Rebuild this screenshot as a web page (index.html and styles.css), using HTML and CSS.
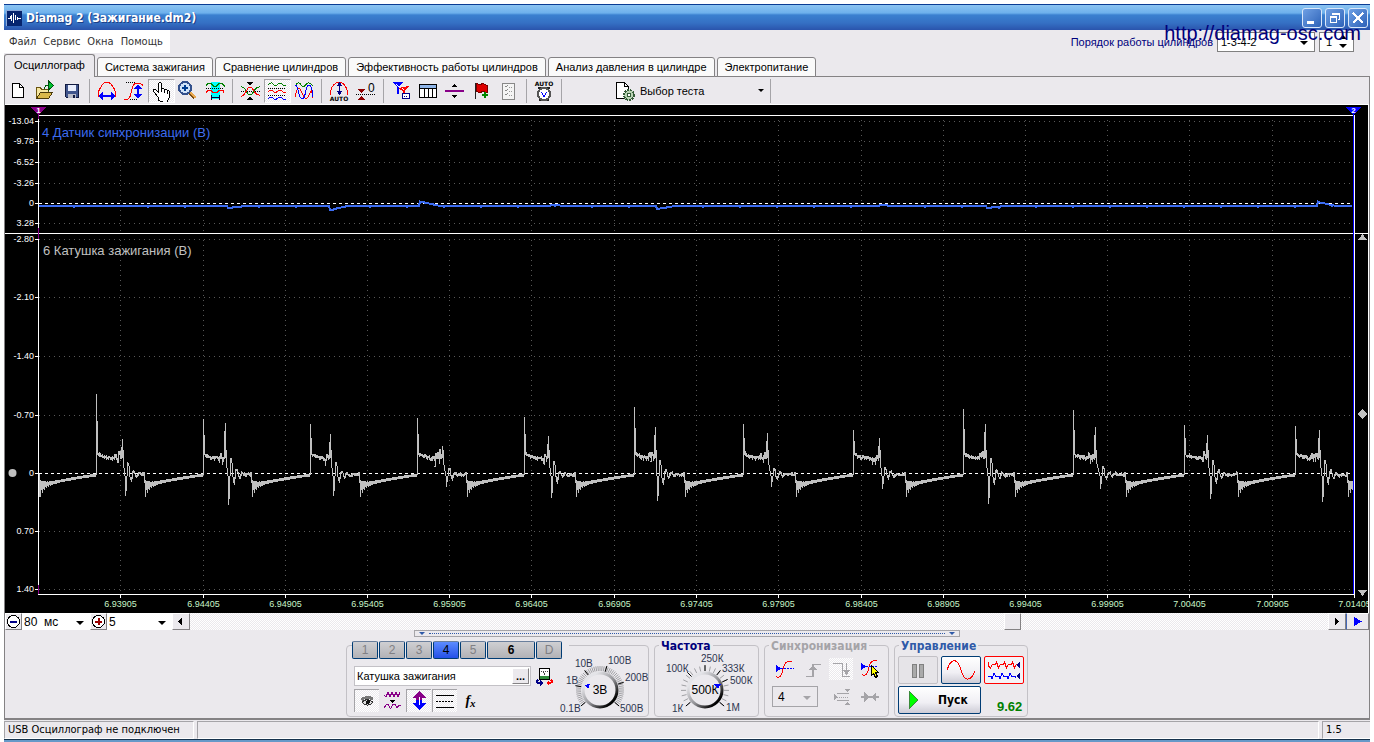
FILE: index.html
```html
<!DOCTYPE html>
<html lang="ru">
<head>
<meta charset="utf-8">
<title>Diamag 2 (Зажигание.dm2)</title>
<link rel="stylesheet" href="styles.css">
</head>
<body>
<div class="window">
  <header class="titlebar">
    <svg class="app-icon" viewBox="0 0 16 16"><rect width="16" height="16" fill="#8aa8d8"/><rect x="1" y="1" width="15" height="15" fill="#06246e"/><path d="M1.500 8.500h3v-3M5.500 5v6M7.500 3v10M9.500 5v5M11.500 7v3M11 8.500h4" fill="none" stroke="#fff"/></svg>
    <h1 class="title">Diamag 2 (Зажигание.dm2)</h1>
    <div class="window-buttons">
      <button class="wbtn" aria-label="Свернуть"><svg viewBox="1 1 18 18"><path d="M5 14h7" stroke="#fff" stroke-width="3"/></svg></button>
      <button class="wbtn" aria-label="Восстановить"><svg viewBox="1 1 18 18"><path d="M7.500 7V5.500h7v6H13M5.500 8.500h6v6h-6zM5 9h7M7 6h8" fill="none" stroke="#fff"/></svg></button>
      <button class="wbtn" aria-label="Закрыть"><svg viewBox="1 1 18 18"><path d="M5 5l10 10M15 5L5 15" stroke="#fff" stroke-width="2"/></svg></button>
    </div>
  </header>

  <div class="menu-row">
    <nav class="menu">
      <button>Файл</button><button>Сервис</button><button>Окна</button><button>Помощь</button>
    </nav>
    <div class="order">
      <label for="order">Порядок работы цилиндров</label>
      <span class="select order-select"><select id="order"><option>1-3-4-2</option></select></span>
      <span class="spinner"><input type="text" value="1" aria-label="Цилиндр"></span>
    </div>
  </div>
  <a class="site" href="#">http://diamag-osc.com</a>

  <div class="tabs" role="tablist">
    <button class="tab active" role="tab">Осциллограф</button>
    <button class="tab" role="tab">Система зажигания</button>
    <button class="tab" role="tab">Сравнение цилиндров</button>
    <button class="tab" role="tab">Эффективность работы цилиндров</button>
    <button class="tab" role="tab">Анализ давления в цилиндре</button>
    <button class="tab" role="tab">Электропитание</button>
  </div>

  <main class="pane">
    <div class="toolbar">
      <button class="tool" aria-label="Новый"><svg viewBox="0 0 24 22"><path d="M6.500 3.500h7l4 4v10h-11z" fill="#fff" stroke="#000"/><path d="M13.500 3.500v4h4" fill="none" stroke="#000"/></svg></button>
      <button class="tool" aria-label="Открыть"><svg viewBox="0 0 24 22"><path d="M3.500 18.500v-11h4l1 2h7v3" fill="#f5e6a0" stroke="#6b5510"/><path d="M3.500 18.500l4-6h12l-4 6z" fill="#d9b84a" stroke="#4a3a08"/><path d="M15.500 1v9l5-4.500z" fill="#00c030" stroke="#004d10"/><path d="M11 9c1-3 2-4 4-4" fill="none" stroke="#006010"/></svg></button>
      <button class="tool" aria-label="Сохранить"><svg viewBox="0 0 24 22"><path d="M5.500 4.500h13v13h-12l-1-1z" fill="#40558c" stroke="#111a40"/><path d="M8 5h8v6H8z" fill="#e9eefc"/><path d="M8 14h8v4H8z" fill="#b9bcc8"/><path d="M13 15h2v3h-2z" fill="#111a40"/></svg></button>
      <span class="sep"></span>
      <button class="tool" aria-label="Растянуть по времени"><svg viewBox="0 0 24 22"><path d="M3.500 17v-4c0-3 1-4 3-7s3-4 5.500-4 4 2 5.500 4 3 4 3 7v4" fill="none" stroke="#f00"/><path d="M5 16h14" stroke="#00f" stroke-width="2"/><path d="M3 16l5-4v8zM21 16l-5-4v8z" fill="#00f"/></svg></button>
      <button class="tool" aria-label="Растянуть по уровню"><svg viewBox="0 0 24 22"><path d="M4 2.500h9M8 19.500h8" stroke="#000" stroke-dasharray="1 1"/><path d="M2 19c5 1 6-1 7-6s2-10 6-10c3 0 5 1 6 3" fill="none" stroke="#f00"/><path d="M16 5v12" stroke="#00f" stroke-width="2"/><path d="M16 4l-4 5h8zM16 19l-4-5h8z" fill="#00f"/></svg></button>
      <button class="tool pressed" aria-label="Перемещение"><svg viewBox="0 0 24 22"><path d="M9.500 20.500v-3l-5-6v-2h2l3 3v-9l1-1h1l1 1v5h2l1 1h2l1 1h1l1 1v6l-2 3v3z" fill="#fff" stroke="#000"/><path d="M12.500 9v3M15.500 10v3M18.500 11v3" stroke="#000"/></svg></button>
      <button class="tool" aria-label="Лупа"><svg viewBox="0 0 24 22"><path d="M13 12l6 6" stroke="#7a4a10" stroke-width="4"/><path d="M14 12l6 6" stroke="#e8a850" stroke-width="2"/><circle cx="9" cy="8" r="6" fill="#cfe2f8" stroke="#33508c" stroke-width="2"/><path d="M9 5v6M6 8h6" stroke="#003c90" stroke-width="2"/></svg></button>
      <button class="tool" aria-label="Участок"><svg viewBox="0 0 24 22"><path d="M8 2h9v17H8z" fill="#0ff"/><path d="M3 5.500l2-2h3l3 3h2l3-3h3l3 3" fill="none" stroke="#008000"/><path d="M3 8.500h18" stroke="#000" stroke-dasharray="1 1"/><path d="M3 12.500l2-2h3l2 2h4l2-2h4l1 2" fill="none" stroke="#f00"/><path d="M8 17.500h8M8.500 15v5M16.500 15v5" stroke="#003"/></svg></button>
      <span class="sep"></span>
      <button class="tool" aria-label="Совместить"><svg viewBox="0 0 24 22"><path d="M3 11.500h19" stroke="#000" stroke-dasharray="1 1"/><path d="M3 7c5-1 5 8 9 8s4-9 10-8" fill="none" stroke="#008000"/><path d="M3 16c5 1 5-9 9-9s4 9 10 8" fill="none" stroke="#f00"/><path d="M9 2h6l-3 4zM9 20h6l-3-4z"/></svg></button>
      <button class="tool pressed" aria-label="Разнести"><svg viewBox="0 0 24 22"><path d="M3 5c3-3 4-3 6 0s4-2 6-2 3 4 6 2" fill="none" stroke="#008000"/><path d="M3 8.500h18M3 15.500h18" stroke="#000" stroke-dasharray="1 1"/><path d="M3 12c3-3 4-2 6 0s4-2 6-2 3 4 6 2" fill="none" stroke="#f00"/><path d="M3 19c3-3 4-2 6 0s4-2 6-2 3 4 6 2" fill="none" stroke="#00f"/></svg></button>
      <button class="tool" aria-label="Наложить"><svg viewBox="0 0 24 22"><path d="M3 6c3-5 5-3 7 0s4-4 7-3 3 3 4 2" fill="none" stroke="#008000"/><path d="M3 17C6 3 8 8 10 13s4 8 7 2 2-6 4 3" fill="none" stroke="#f00"/><path d="M3 5c4 0 3 13 7 14s3-14 7-14 3 10 4 12" fill="none" stroke="#00f"/></svg></button>
      <span class="sep"></span>
      <button class="tool" aria-label="Автомасштаб"><svg viewBox="0 0 24 22"><path d="M3.500 15v-3c1-3 1-5 3-7s4-3 5.500-3 4 1 5.500 3 3 4 3 7v3" fill="none" stroke="#f00"/><path d="M12.500 4v9" stroke="#008"/><path d="M12.500 2l-3 4h6zM12.500 15l-3-4h6z" fill="#008"/><text x="12" y="21" class="tiny" text-anchor="middle">AUTO</text></svg></button>
      <button class="tool" aria-label="Установить ноль"><svg viewBox="0 0 24 22"><path d="M4 9h7l-3.500 4zM4 20h7l-3.500-4z" fill="#900000"/><path d="M2 14.500h20" stroke="#000" stroke-dasharray="1 1"/><text x="14" y="12" class="zero">0</text></svg></button>
      <span class="sep"></span>
      <button class="tool" aria-label="Маркеры"><svg viewBox="0 0 24 22"><path d="M3 2h11l-4 5v7H8V7z" fill="#00f"/><path d="M7 4l3 3" stroke="#fff"/><path d="M9 8l11-2-4 5v6h-2v-6z" fill="#f00"/><path d="M13 8l2 2" stroke="#fff"/><path d="M13.500 13.500h7v5h-7z" fill="#fff" stroke="#008"/><path d="M15 16.500h4" stroke="#008" stroke-dasharray="1 1"/></svg></button>
      <button class="tool" aria-label="Таблица"><svg viewBox="0 0 24 22"><path d="M3.500 4.500h17v13h-17z" fill="#fff" stroke="#000"/><path d="M4 5h16v3H4z" fill="#8fb5e8"/><path d="M4 8.500h16M8.500 8v9M12.500 8v9M16.500 8v9" stroke="#000"/></svg></button>
      <button class="tool" aria-label="Разделитель"><svg viewBox="0 0 24 22"><path d="M2 11h19" stroke="#808" stroke-width="2"/><path d="M9 7l2.500-3L14 7zM9 15h5l-2.500 3z"/></svg></button>
      <button class="tool" aria-label="Добавить метку"><svg viewBox="0 0 24 22"><path d="M5.500 3v16" stroke="#222"/><path d="M6 3.500l4 1 3-1 4 2v7l-4-1-3 1-4-1z" fill="#d00" stroke="#700"/><path d="M15 12v6M12 15h6" stroke="#080" stroke-width="2"/></svg></button>
      <button class="tool" aria-label="Протокол"><svg viewBox="0 0 24 22"><path d="M5.500 3.500h12v16h-12z" fill="#f4f4f4" stroke="#888"/><path d="M8 6l1 1 2-2M8 10l1 1 2-2M8 14l1 1 2-2" fill="none" stroke="#888"/><path d="M12 7.500h4M12 11.500h4M12 15.500h4" stroke="#999" stroke-dasharray="1 1"/></svg></button>
      <span class="sep"></span>
      <button class="tool" aria-label="Автоизмерение"><svg viewBox="0 0 24 22"><text x="12" y="6" class="tiny" text-anchor="middle">AUTO</text><path d="M6 8h3M15 8h3M7 20h2M15 20h2" stroke="#222" stroke-width="2"/><circle cx="12" cy="14" r="6" fill="#fff" stroke="#555" stroke-width="2"/><path d="M9.500 12l2.500 5 2.500-5" fill="none" stroke="#00f"/></svg></button>
      <span class="sep"></span>
      <button class="test-select">
        <svg class="test-icon" viewBox="0 0 22 22"><path d="M2.500 2.500h8l4 4v12h-12z" fill="#fff" stroke="#000"/><path d="M10.500 2.500v4h4" fill="none" stroke="#000"/><circle cx="15" cy="15" r="5" fill="#b9d4b4" stroke="#345c38" stroke-width="2" stroke-dasharray="2 1"/><circle cx="15" cy="15" r="2" fill="#fff" stroke="#345c38"/></svg>
        <span>Выбор теста</span><i class="arrow"></i>
      </button>
      <span class="sep"></span>
    </div>

    <div class="scope"><svg id="scope" viewBox="5 105 1363 508" role="img" aria-label="Осциллограмма"></svg></div>

    <div class="scroll-row">
      <button class="mini" aria-label="Уменьшить"><svg viewBox="1 1 15 15"><circle cx="8.500" cy="8.500" r="6" fill="#fff" stroke="#000"/><path d="M5 8.500h7" stroke="#008" stroke-width="2"/></svg></button>
      <span class="select zoom-x"><select aria-label="Развёртка"><option>80 &nbsp;мс</option></select></span>
      <button class="mini" aria-label="Увеличить"><svg viewBox="1 1 15 15"><circle cx="8.500" cy="8.500" r="6" fill="#fff" stroke="#000"/><path d="M5 8.500h7M8.500 5v7" stroke="#900" stroke-width="2"/></svg></button>
      <span class="select zoom-y"><select aria-label="Шаг"><option>5</option></select></span>
      <button class="mini raised" aria-label="Влево"><svg viewBox="1 1 15 15"><path d="M10 4v9L6 8.500z"/></svg></button>
      <div class="track"><span class="thumb"></span></div>
      <button class="mini raised" aria-label="Вправо"><svg viewBox="1 1 15 15"><path d="M7 4v9l4-4.500z"/></svg></button>
      <button class="mini raised play" aria-label="Воспроизвести"><svg viewBox="1 1 15 15"><path d="M5 4v9l8-4.500z" fill="#00f"/></svg></button>
    </div>

    <div class="dock">
      <div class="splitter"><i class="arrow"></i><span></span><i class="arrow"></i></div>
      <div class="groups">
        <section class="group channels">
          <div class="channel-tabs">
            <button>1</button><button>2</button><button>3</button><button class="on">4</button><button>5</button><button class="current">6</button><button>D</button>
          </div>
          <div class="channel-body">
            <div class="channel-left">
              <div class="name-row">
                <span class="name-box"><input type="text" value="Катушка зажигания" aria-label="Название канала"><button aria-label="Выбрать">...</button></span>
                <button class="plain" aria-label="Инвертировать"><svg viewBox="0 0 20 20"><path d="M4.500 1.500h10v11h-10z" fill="#fff" stroke="#000"/><path d="M5 9h9v3H5z" fill="#2f8a3a"/><path d="M6 4.500h7M8 5l2 3" stroke="#444" stroke-dasharray="1 1"/><path d="M3.500 13c-3 1-2 3 2 3" fill="none" stroke="#008" stroke-width="2"/><path d="M5 13v6l3-3z" fill="#008"/><path d="M15.500 13c3 1 2 3-2 3" fill="none" stroke="#f00" stroke-width="2"/><path d="M14 13v6l-3-3z" fill="#f00"/></svg></button>
              </div>
              <div class="flag-row">
                <button class="flag pressed" aria-label="Показать"><svg viewBox="0 0 24 22"><path d="M6 10c3-3 8-3 12-1" fill="none" stroke="#777" stroke-width="3"/><path d="M7 12c3-3 7-3 11 0-3 4-8 4-11 0z" fill="#ddd" stroke="#333"/><circle cx="13" cy="12" r="2" fill="#111"/></svg></button>
                <button class="flag" aria-label="Фильтр"><svg viewBox="0 0 24 22"><path d="M4 5l2 2 2-5 2 5 2-5 2 5 2-5 2 5 2-5M4 18l2-3 2-1 2 4h1l2-4h2l2 4 2-3h2" fill="none" stroke="#808"/><path d="M9 10h6l-3 3z"/></svg></button>
                <button class="flag pressed" aria-label="Инверсия"><svg viewBox="0 0 24 22"><path d="M12 1l7 7h-4v3H9V8H5z" fill="#808"/><path d="M12 20l7-7h-4v-3H9v3H5z" fill="#00f"/><path d="M12 7v8" stroke="#fff"/></svg></button>
                <button class="flag pressed" aria-label="Линии уровня"><svg viewBox="0 0 24 22"><path d="M3 5.500h18M3 17.500h18" stroke="#000"/><path d="M3 11.500h18" stroke="#000" stroke-dasharray="2 1"/></svg></button>
                <button class="flag fx" aria-label="Функция">f<sub>x</sub></button>
              </div>
            </div>
            <svg class="knob" viewBox="558 655 90 60" role="img" aria-label="Уровень 3В" data-knob="volt"></svg>
          </div>
        </section>

        <section class="group freq">
          <h2>Частота</h2>
          <svg class="knob-wide" viewBox="659 653 96 62" role="img" aria-label="Частота 500К" data-knob="freq"></svg>
        </section>

        <section class="group sync">
          <h2>Синхронизация</h2>
          <div class="sync-row">
            <button class="plain" aria-label="Уровень"><svg viewBox="0 0 20 20"><path d="M2 17c4 4 6-2 7-7s3-9 9-7" fill="none" stroke="#f00"/><path d="M4 9.500h16" stroke="#00f" stroke-dasharray="2 1"/><path d="M2 6v7l5-3.500z" fill="#00f"/></svg></button>
            <button class="plain" aria-label="Фронт"><svg viewBox="0 0 20 20"><path d="M3 17.500h7v-12h8" fill="none" stroke="#a5a4a8"/><path d="M10 5v12" stroke="#a5a4a8" stroke-width="2"/><path d="M6 11l4-5 4 5z" fill="#a5a4a8"/></svg></button>
            <button class="plain dither" aria-label="Спад"><svg viewBox="0 0 20 20"><path d="M2 4.500h9v13h8" fill="none" stroke="#a5a4a8"/><path d="M15.500 4v9" stroke="#a5a4a8"/><path d="M12 11l3.500 5 3.500-5z" fill="#a5a4a8"/></svg></button>
            <button class="plain" aria-label="Захват"><svg viewBox="0 0 20 20"><path d="M2 15c4 4 6-2 7-7s3-7 8-6" fill="none" stroke="#f00"/><path d="M3 7.500h15" stroke="#00f" stroke-dasharray="2 1"/><path d="M1 4v7l5-3.500z" fill="#00f"/><path d="M11.500 6.500v10l2-2 2 4 2-1-2-4h3z" fill="#ff0" stroke="#000"/></svg></button>
          </div>
          <div class="sync-row low">
            <span class="select sync-select"><select aria-label="Канал синхронизации" disabled><option>4</option></select></span>
            <button class="plain" aria-label="Диапазон"><svg viewBox="0 0 20 20"><path d="M5 6.500h12M5 13.500h12" stroke="#a5a4a8"/><path d="M5 10h12" stroke="#a5a4a8" stroke-dasharray="1 1"/><path d="M2 7v6l4-3zM12 2h6l-3 3zM12 18h6l-3-3z" fill="#a5a4a8"/></svg></button>
            <button class="plain" aria-label="Центр"><svg viewBox="0 0 20 20"><path d="M1 10h18" stroke="#a5a4a8" stroke-width="2"/><path d="M4 5v10l5-5zM16 5v10l-5-5z" fill="#a5a4a8"/></svg></button>
          </div>
        </section>

        <section class="group control">
          <h2>Управление</h2>
          <div class="control-grid">
            <button class="big off" aria-label="Пауза"><svg viewBox="1 1 38 26"><path d="M14.500 8.500h4v13h-4zM21.500 8.500h4v13h-4z" fill="#aaa" stroke="#808080"/></svg></button>
            <button class="big" aria-label="Одиночный"><svg viewBox="1 1 38 26"><path d="M6 14c4-12 10-13 14 0s10 11 14 1" fill="none" stroke="#f00"/></svg></button>
            <button class="big red" aria-label="Запись"><svg viewBox="1 1 38 26"><path d="M4.500 6v4l2 2 2-4h3l1-2 2 6 2-4h3l1-2 2 6 2-4h3l1-2 2 6 2-4h3" fill="none" stroke="#f00"/><path d="M4 20h3l1 3 2-6 2 4 3-1 1 3 2-6 2 4 3-1 1 3 2-6 2 4 3-1 1 2" fill="none" stroke="#00f"/><path d="M36 6v6l-4-3zM36 17v6l-4-3z" fill="#008"/></svg></button>
            <button class="big start"><svg viewBox="0 0 14 20"><path d="M2 1l9 9-9 9z" fill="#0f0" stroke="#3a8a3a"/></svg>Пуск</button>
            <output>9.62</output>
          </div>
        </section>
      </div>
    </div>
  </main>

  <footer class="status">
    <span class="cell usb">USB Осциллограф не подключен</span>
    <span class="cell rest"></span>
    <span class="cell ver">1.5</span>
  </footer>
</div>
<script src="scope.js"></script>
</body>
</html>
```
FILE: styles.css
```css
* { box-sizing: border-box; }

body {
  margin: 0;
  padding: 4px 4px 0;
  background: #fff;
  color: #000;
  font-family: "Liberation Sans", Arial, sans-serif;
  font-size: 11px;
  line-height: 14px;
}

button, input, select {
  margin: 0;
  padding: 0;
  border: 0;
  background: none;
  color: inherit;
  font: inherit;
}

svg { display: block; shape-rendering: crispEdges; }

.window {
  position: relative;
  display: flex;
  flex-direction: column;
  background: #ebe9ed;
  border-bottom: 3px solid #6699c8;
}

.titlebar {
  display: flex;
  align-items: center;
  height: 26px;
  padding: 0 2px;
  border-top: 1px solid #0a3c94;
  background: linear-gradient(#8cc4f2 0, #6db0ec 8px, #3a80d0 10px, #3570c4 18px, #2a54ac 25px);
}
.app-icon { width: 16px; height: 16px; }
.title {
  flex: 1;
  margin: 0 0 0 4px;
  color: #fff;
  font: bold 12px/16px "DejaVu Sans Condensed", "DejaVu Sans", sans-serif;
  text-shadow: 1px 1px #1c3f86;
}
.window-buttons { display: flex; gap: 3px; }
.wbtn {
  width: 20px;
  height: 20px;
  border: 1px solid #dbe8fa;
  border-radius: 3px;
  background: linear-gradient(135deg, #6fa0e4, #2d62b8);
}
.wbtn svg { width: 18px; height: 18px; }

.menu-row {
  display: flex;
  align-items: flex-start;
  justify-content: space-between;
  height: 24px;
}
.menu {
  display: flex;
  gap: 7px;
  height: 23px;
  padding: 0 7px 0 5px;
  background: #fff;
  color: #333;
  font: 11px/14px "DejaVu Sans Condensed", "DejaVu Sans", sans-serif;
}
.order {
  display: flex;
  align-items: center;
  gap: 4px;
  padding: 2px 16px 0 0;
  color: #00007c;
}
.select { position: relative; display: inline-flex; background: #fff; color: #000; }
.select select { width: 100%; padding: 0 3px; appearance: none; opacity: 1; }
.select::after,
.arrow {
  border: 4px solid transparent;
  border-bottom-width: 0;
  border-top-color: #000;
  content: "";
}
.select::after { position: absolute; right: 6px; top: 50%; margin-top: -1px; pointer-events: none; }
.order-select, .spinner { height: 20px; border: 1px solid #808080; }
.order-select { width: 98px; }
.spinner { position: relative; width: 35px; background: #fff; color: #000; }
.spinner input { width: 24px; height: 18px; padding-left: 6px; }
.spinner::before, .spinner::after {
  position: absolute;
  right: 6px;
  border: 4px solid transparent;
  content: "";
}
.spinner::before { top: 2px; border-top-width: 0; border-bottom-color: #000; }
.spinner::after { bottom: 3px; border-bottom-width: 0; border-top-color: #000; }
.site {
  position: absolute;
  top: 18px;
  right: 9px;
  color: #00007c;
  font-size: 20px;
  line-height: 22px;
  text-decoration: none;
}

.tabs {
  display: flex;
  align-items: flex-end;
  gap: 2px;
  height: 23px;
  background: linear-gradient(#848284, #848284) 0 100% / 100% 1px no-repeat;
}
.tab {
  height: 20px;
  padding: 0 7px;
  border: 1px solid #848284;
  border-radius: 3px 3px 0 0;
  background: #fafafa;
  white-space: nowrap;
}
.tab.active {
  height: 23px;
  padding: 0 9px 2px;
  border-bottom: 0;
  background: #ebe9ed;
}

.pane { border: 1px solid #848284; border-top: 0; border-bottom: 2px solid #848284; }

.toolbar {
  display: flex;
  align-items: center;
  height: 28px;
  border-bottom: 1px solid #fff;
}
.tool { width: 27px; height: 24px; padding: 0 1px; }
.tool svg { width: 24px; height: 22px; }
.pressed, .dither, .track {
  background: repeating-conic-gradient(#fff 0 25%, #ebe9ed 0 50%) 0 0 / 2px 2px;
}
.tool.pressed { padding: 0; border: 1px solid #a5a4a8; border-color: #a5a4a8 #fff #fff #a5a4a8; }
.sep { width: 8px; height: 24px; background: linear-gradient(#a5a4a8, #a5a4a8) 3px 0 / 1px 24px no-repeat; }
.tiny { font: bold 6px "DejaVu Sans", sans-serif; }
.zero { font: 12px "Liberation Sans", sans-serif; }
.test-select { display: flex; align-items: center; gap: 4px; width: 201px; padding: 0 3px 0 48px; }
.test-icon { width: 22px; height: 22px; }
.test-select .arrow { margin-left: auto; border-width: 3px; border-bottom-width: 0; }
.arrow { display: block; width: 0; height: 0; }

.scope { border-right: 1px solid #fff; background: #000; }
.scope svg { width: 100%; }
.scope text, .knob text, .knob-wide text { font-family: "Liberation Sans", Arial, sans-serif; }
.scale { fill: #fff; font-size: 9px; }
.time { fill: #c8f5c8; font-size: 9px; }
.trace-title { font-size: 13px; }
.flag-no { fill: #fff; font-size: 8px; font-weight: bold; }

.scroll-row { display: flex; height: 17px; }
.mini { width: 17px; border: 1px solid #fff; border-color: #fff #848284 #848284 #fff; background: #ebe9ed; }
.mini svg { width: 15px; height: 15px; }
.raised { width: 18px; }
.zoom-x { width: 68px; font-size: 12px; }
.zoom-y { width: 65px; font-size: 12px; }
.scroll-row .select select { padding: 0 2px; }
.track { flex: 1; display: flex; justify-content: flex-end; padding-right: 307px; }
.thumb { width: 17px; border: 1px solid #fff; border-color: #fff #848284 #848284 #fff; background: #ebe9ed; }
.play { width: 23px; border-left: 1px solid #4468b8; }
.play svg { width: 21px; }

.dock { display: flex; flex-direction: column; align-items: center; }
.splitter {
  display: flex;
  align-items: center;
  gap: 4px;
  width: 546px;
  height: 7px;
  padding: 0 4px;
  border: 1px solid #a5a4a8;
}
.splitter .arrow { border-width: 3px; border-bottom-width: 0; border-top-color: #2f5aa8; }
.splitter span { flex: 1; border-top: 1px dotted #2f5aa8; }
.groups { display: flex; gap: 5px; padding: 8px 0 1px; }
.group { height: 72px; border: 1px solid #c3c1c6; border-radius: 4px; }
.group h2 {
  width: max-content;
  margin: -7px 0 0 4px;
  padding: 0 2px;
  background: #ebe9ed;
  font: bold 12px/14px "DejaVu Sans Condensed", "DejaVu Sans", sans-serif;
}
.freq h2 { color: #00007c; }
.sync h2 { color: #a5a4a8; }
.control h2 { color: #2f5aa8; }

.channels { width: 303px; }
.channel-tabs {
  display: flex;
  gap: 1px;
  width: 217px;
  margin: -5px 0 0 5px;
  background: #ebe9ed;
}
.channel-tabs button {
  width: 26px;
  height: 18px;
  border: 1px solid #003c74;
  border-top-color: #6a7f9c;
  border-radius: 2px;
  background: linear-gradient(#cfcfd2, #b2b2b6);
  color: #808084;
  font-size: 12px;
}
.channel-tabs .on { background: linear-gradient(#5c8cff, #2450e8); color: #000; }
.channel-tabs .current { width: 48px; color: #000; font-weight: bold; }
.channel-body { display: flex; justify-content: space-between; }
.channel-left { padding: 7px 0 0 7px; }
.name-row { display: flex; gap: 2px; }
.name-box { display: flex; width: 177px; height: 20px; padding: 1px; border: 1px solid #c3c1c6; background: #fff; }
.name-box input { flex: 1; min-width: 0; padding-left: 1px; }
.name-box button {
  width: 17px;
  border: 1px solid #fff;
  border-color: #fff #848284 #848284 #fff;
  background: #ebe9ed;
  font-weight: bold;
  line-height: 8px;
}
.plain { width: 24px; height: 22px; padding: 0 2px; }
.plain svg { width: 20px; height: 20px; }
.flag-row { display: flex; gap: 1px; padding-top: 1px; }
.flag { width: 25px; height: 23px; }
.flag svg { width: 24px; height: 22px; }
.flag.pressed { border-top: 1px solid #a5a4a8; border-left: 1px solid #a5a4a8; }
.fx { font: italic bold 14px/20px "Liberation Serif", serif; }
.fx sub { font-size: 11px; line-height: 0; vertical-align: -2px; }
.knob { width: 90px; height: 60px; margin-top: -4px; overflow: visible; }
.knob-wide { width: 96px; height: 62px; margin-left: 4px; }
.knob-label { fill: #2d3650; font-size: 10px; }
.knob-value { font-size: 12px; }

.freq { width: 105px; }
.sync { width: 125px; }
.sync-row { display: flex; justify-content: space-between; padding: 5px 6px 0 7px; }
.sync-row.low { padding-top: 6px; justify-content: flex-start; gap: 4px; }
.sync-select { width: 47px; height: 21px; margin-right: 8px; border: 1px solid #a5a4a8; background: #ebe9ed; font-size: 12px; }
.sync-select::after { border-top-color: #a5a4a8; }
.sync-select select { padding-left: 5px; }

.control { width: 134px; }
.control-grid { display: grid; grid-template-columns: 40px 40px 40px; gap: 2px 3px; padding: 3px 0 0 3px; }
.big {
  height: 28px;
  border: 1px solid #003c74;
  border-radius: 2px;
  background: linear-gradient(#fff, #f0eff4 60%, #cdccd6);
}
.big svg { width: 38px; height: 26px; }
.big.off { border-color: #c3c1c6; background: #e6e4e8; }
.big.red { border-color: #f00; background: #f4f3f6; }
.big.start {
  grid-column: span 2;
  display: flex;
  align-items: center;
  gap: 17px;
  padding-left: 8px;
  font: bold 12px/14px "DejaVu Sans Condensed", "DejaVu Sans", sans-serif;
}
.big.start svg { width: 14px; height: 20px; }
.control output {
  align-self: end;
  padding-left: 13px;
  color: #008000;
  font-size: 13px;
  font-weight: bold;
}

.status {
  display: flex;
  gap: 3px;
  padding-top: 1px;
  border-bottom: 1px solid #16324c;
  font: 11px/16px "DejaVu Sans Condensed", "DejaVu Sans", sans-serif;
}
.cell { height: 18px; padding: 0 3px; border: 1px solid #a5a4a8; border-color: #a5a4a8 #fff #fff #a5a4a8; }
.usb { width: 190px; }
.rest { flex: 1; }
.ver { width: 48px; border-right: 0; }
```
FILE: scope.js
```js
const NS = "http://www.w3.org/2000/svg";
function add(parent, tag, attrs, text) {
  const el = document.createElementNS(NS, tag);
  for (const k in attrs) el.setAttribute(k, attrs[k]);
  if (text !== undefined) el.textContent = text;
  parent.appendChild(el);
  return el;
}
function line(parent, d, stroke, dash, width) {
  return add(parent, "path", { d, fill: "none", stroke, "stroke-dasharray": dash || "none", "stroke-width": width || 1 });
}
let seed = 7;
function noise(a) {
  seed = (seed * 16807) % 2147483647;
  return (seed / 2147483647 - 0.5) * 2 * a;
}

const scope = document.getElementById("scope");
const L = 38.5, R = 1353;

/* grid */
const columns = [120, 203, 285, 367, 449, 531, 614, 696, 778, 861, 943, 1025, 1107, 1189, 1272, 1354];
const upper = [[121, "-13.04"], [141, "-9.78"], [162, "-6.52"], [183, "-3.26"], [203, "0"], [223, "3.28"]];
const lower = [[239, "-2.80"], [297, "-2.10"], [356, "-1.40"], [415, "-0.70"], [473, "0"], [531, "0.70"], [589, "1.40"]];
const GRID = "#585858";
columns.forEach((x, i) => {
  if (x < 1354) line(scope, `M${x + 0.5} 120V232M${x + 0.5} 240V593`, GRID, "1 4");
  line(scope, `M${x + 0.5} 595V598`, "#fff");
  add(scope, "text", { x: x + 0.5, y: 607, "text-anchor": "middle", class: "time" }, (6.93905 + i * 0.005).toFixed(5));
});
upper.concat(lower).forEach(([y, label]) => {
  const zero = label === "0";
  line(scope, `M${L} ${y + 0.5}H${R}`, zero ? "#fff" : GRID, zero ? "3 3" : "1 4");
  line(scope, `M35 ${y + 0.5}H38`, "#fff");
  add(scope, "text", { x: 34, y: y + 3, "text-anchor": "end", class: "scale" }, label);
});

/* synchronisation sensor trace */
const pulses = [
  [96, 394, 122, 439, 125, 496, 144], [203, 419, 225, 423, 228, 505, 251], [310, 424, 330, 434, 333, 496, 359],
  [417, 418, 442, 446, 446, 487, 466], [524, 417, 548, 436, 551, 498, 575], [634, 407, 655, 427, 657, 501, 684],
  [743, 424, 767, 433, 771, 487, 795], [853, 430, 879, 438, 882, 489, 905], [963, 409, 985, 424, 988, 504, 1014],
  [1073, 410, 1095, 427, 1100, 489, 1125], [1184, 425, 1207, 435, 1210, 499, 1237], [1295, 426, 1319, 430, 1322, 502, 1347]
];
const kicks = { 228: 2, 330: 4, 420: -4, 657: 3, 987: 2, 1318: -4, 551: -1, 880: -1 };
let blue = "M39 206";
for (let x = 40; x < 1353; x++) {
  let y = 206;
  for (const p of pulses) if (x > p[0] && x < p[2]) y = 205.5;
  for (const k in kicks) if (x >= k && x < +k + 18) y += kicks[k] * (1 - (x - k) / 18);
  if (x % 37 === 0) y += 1;
  blue += `L${x} ${y.toFixed(1)}`;
}
line(scope, blue, "#3c6cf0", null, 2);

/* ignition coil trace */
let d = "M39 474V497";
function ramp(from, to) {
  for (let x = from; x < to; x++) {
    const t = x - from;
    const base = 475 + 10 * Math.pow(1 - t / (to - from), 1.2);
    const burst = t < 18 ? 10 * Math.exp(-t / 5) * (t % 2 ? 0.5 : 1) : 0;
    d += `L${x} ${(base - 1 - burst * 0.4).toFixed(1)}V${(base + 1.5 + burst).toFixed(1)}`;
  }
}
ramp(40, 96);
pulses.forEach((p, i) => {
  const [s, peak, s2, peak2, tx, trough, e] = p;
  const second = peak + (454 - peak) * 0.45;
  d += `L${s} 475V454H${s + 0.5}V${peak}V454H${s + 1.5}V${second.toFixed(0)}V454`;
  for (let x = s + 2; x < s2 - 1; x++) {
    const t = (x - s) / (s2 - s);
    const rise = t > 0.85 ? (t - 0.85) * 45 : 0;
    const y = 453 + 4 * Math.sin(t * 2.6) - rise;
    const amp = (i % 2 ? 1.5 : 1) + (t > 0.7 ? 3 : 0);
    d += `L${x} ${(y + noise(amp)).toFixed(1)}v${(2 + Math.abs(noise(amp))).toFixed(1)}`;
  }
  d += `L${s2 - 1} 459V${peak2 + 8}L${s2} 458V${peak2}L${s2 + 1} 450V460`;
  d += `L${tx} 476V${trough}L${tx + 1} ${trough - 5}L${tx + 2} 476`;
  const a = (trough - 474) / 26;
  for (let t = 3; tx + t < e; t++) {
    const y = 474 - 18 * a * Math.exp(-(t - 2) / 5) * Math.sin((t - 2) * 1.15);
    d += `L${tx + t} ${(y + noise(1)).toFixed(1)}v2`;
  }
  d += `L${e} 472V482L${e + 1} 482V496`;
  ramp(e + 1, i < 11 ? pulses[i + 1][0] : 1404);
});
const clip = add(scope, "clipPath", { id: "plot" });
add(clip, "rect", { x: 38, y: 234, width: 1315, height: 360 });
line(scope, d, "#c0c0c0").setAttribute("clip-path", "url(#plot)");

/* frame */
line(scope, "M38.5 115V594.5H1355M38.5 115.5H1355M1354.5 115V595M5 233.5H1368", "#fff");
line(scope, "M38.5 112V119M38.5 228V239M38.5 585V594", "#808");
line(scope, "M1353.5 112V594", "#00f");
add(scope, "path", { d: "M31 107H46L38.5 115Z", fill: "#808" });
add(scope, "path", { d: "M1346 107H1361L1353.5 115Z", fill: "#00f" });
add(scope, "text", { x: 38.5, y: 113, "text-anchor": "middle", class: "flag-no" }, "1");
add(scope, "text", { x: 1353.5, y: 113, "text-anchor": "middle", class: "flag-no" }, "2");
add(scope, "text", { x: 42, y: 137, class: "trace-title", fill: "#3c6cf0" }, "4 Датчик синхронизации (В)");
add(scope, "text", { x: 43, y: 255, class: "trace-title", fill: "#c0c0c0" }, "6 Катушка зажигания (В)");
add(scope, "path", { d: "M1358 240L1362.5 234L1367 240ZM1358 590H1367L1362.5 596ZM1358 414L1362.5 409L1367 414L1362.5 419Z", fill: "#c0c0c0" });
add(scope, "circle", { cx: 12.5, cy: 473, r: 4, fill: "#c0c0c0", "shape-rendering": "auto" });

/* knobs */
function knob(svg, cx, cy, value, fine, pointer, ticks) {
  const grad = add(svg, "linearGradient", { id: "g" + cx, x1: 0, y1: 0, x2: 1, y2: 1 });
  add(grad, "stop", { offset: 0.2, "stop-color": "#e4e4e8" });
  add(grad, "stop", { offset: 0.55, "stop-color": "#909094" });
  add(grad, "stop", { offset: 0.85, "stop-color": "#000" });
  const ray = (a, r1, r2, stroke) => {
    const c = Math.cos(a * Math.PI / 180), s = Math.sin(a * Math.PI / 180);
    add(svg, "path", { d: `M${cx + r1 * c} ${cy + r1 * s}L${cx + r2 * c} ${cy + r2 * s}`, stroke, "shape-rendering": "auto" });
  };
  for (let a = 140; a <= 400; a += fine) ray(a, 19, 24, "#a0a0a4");
  ticks.forEach(([a, x, y, label]) => {
    ray(a, 19, 25, "#000");
    add(svg, "text", { x, y, class: "knob-label" }, label);
  });
  add(svg, "circle", { cx, cy, r: 17, fill: "#ebe9ed", stroke: `url(#g${cx})`, "stroke-width": 3, "shape-rendering": "auto" });
  add(svg, "text", { x: cx, y: cy + 4, "text-anchor": "middle", class: "knob-value" }, value);
  add(svg, "path", { d: pointer, fill: "#00f" });
}
knob(document.querySelector('[data-knob="volt"]'), 600, 690, "3В", 5, "M584 685L590 684L588 689Z",
  [[140, 560, 712, "0.1В"], [190, 566, 684, "1В"], [232, 575, 667, "10В"], [286, 608, 664, "100В"], [342, 625, 681, "200В"], [400, 620, 712, "500В"]]);
knob(document.querySelector('[data-knob="freq"]'), 705, 690, "500К", 13, "M714 684L721 684L718 689Z",
  [[140, 672, 712, "1К"], [225, 666, 672, "100К"], [270, 701, 662, "250К"], [308, 722, 672, "333К"], [335, 730, 684, "500К"], [400, 726, 711, "1М"]]);
```
